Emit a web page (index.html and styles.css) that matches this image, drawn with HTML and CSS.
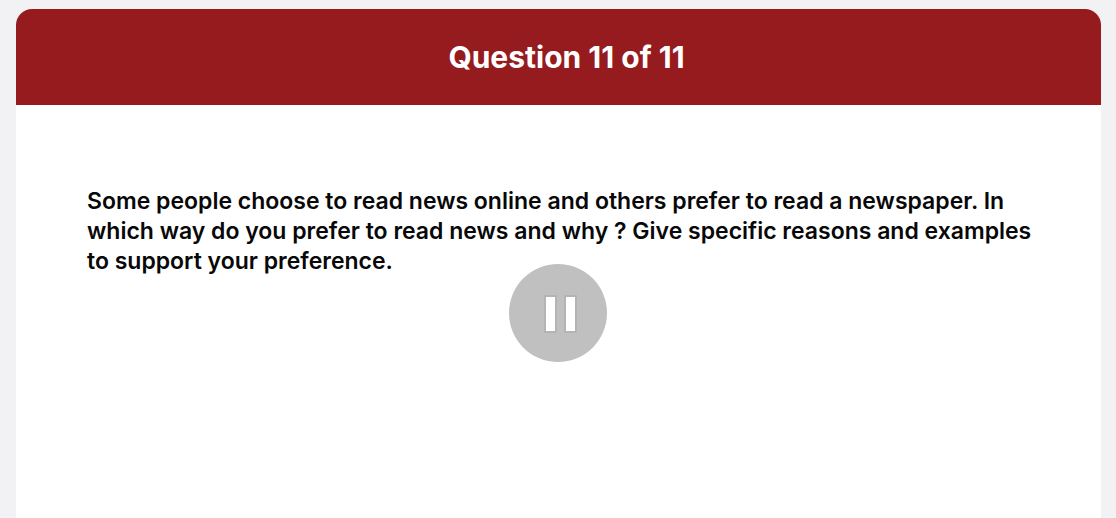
FILE: index.html
```html
<!DOCTYPE html>
<html lang="en">
<head>
<meta charset="utf-8">
<meta name="viewport" content="width=device-width, initial-scale=1">
<title>Question 11 of 11</title>
<link rel="stylesheet" href="styles.css">
</head>
<body>
<main class="card">
  <header class="card-header">
    <h1 class="title">Question 11 of 11</h1>
  </header>
  <section class="card-body">
    <p class="question">Some people choose to read news online and others prefer to read a newspaper. In which way do you prefer to read news and why ? Give specific reasons and examples to support your preference.</p>
  </section>
</main>
<button class="pause" type="button" aria-label="Pause">
  <svg class="pause-icon" viewBox="0 0 98 98" aria-hidden="true">
    <rect class="pause-edge" x="35" y="31" width="13" height="38"/>
    <rect class="pause-edge" x="55" y="31" width="13" height="38"/>
    <rect x="37" y="33" width="9" height="34"/>
    <rect x="57" y="33" width="9" height="34"/>
  </svg>
</button>
</body>
</html>
```
FILE: styles.css
```css
* {
  box-sizing: border-box;
}

body {
  min-height: 100vh;
  margin: 0;
  padding: 9px 15px 0 16px;
  display: flex;
  background: #f2f2f4;
  color: #080808;
  font-family: Inter, "Liberation Sans", sans-serif;
}

.card {
  flex: 1;
  background: #fff;
  border-radius: 16px 16px 0 0;
  overflow: hidden;
}

.card-header {
  padding: 28px 16px;
  background: #961b1e;
  color: #fff;
  text-align: center;
}

.title {
  margin: 0;
  padding-left: 16px;
  font-size: 30px;
  line-height: 40px;
  font-weight: 700;
}

.card-body {
  padding: 81px 48px 81px 71px;
}

.question {
  margin: 0;
  font-size: 23px;
  line-height: 30px;
  font-weight: 600;
}

.pause {
  position: absolute;
  top: 264px;
  left: 50%;
  width: 98px;
  height: 98px;
  margin-left: -49px;
  padding: 0;
  border: 0;
  border-radius: 50%;
  background: #c0c0c0;
}

.pause-icon {
  display: block;
  width: 100%;
  fill: #fff;
}

.pause-edge {
  fill: #b4b4b4;
}
```
